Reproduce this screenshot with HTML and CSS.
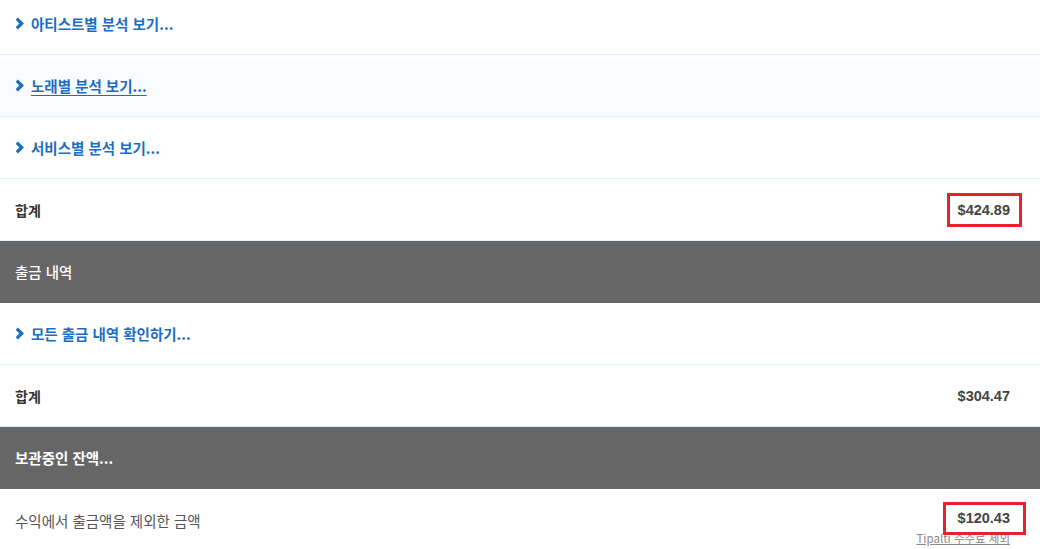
FILE: index.html
```html
<!DOCTYPE html>
<html lang="ko">
<head>
  <meta charset="UTF-8">
  <title>수익 분석</title>
  <link rel="stylesheet" href="styles.css">
</head>
<body>
  <div class="report">
    <div class="row">
      <a class="more" href="#"><svg class="chev" viewBox="0 0 8 12"><path d="M1.5 1.5 L6 6 L1.5 10.5" /></svg>아티스트별 분석 보기...</a>
    </div>
    <div class="row alt">
      <a class="more hover" href="#"><svg class="chev" viewBox="0 0 8 12"><path d="M1.5 1.5 L6 6 L1.5 10.5" /></svg><span>노래별 분석 보기...</span></a>
    </div>
    <div class="row">
      <a class="more" href="#"><svg class="chev" viewBox="0 0 8 12"><path d="M1.5 1.5 L6 6 L1.5 10.5" /></svg>서비스별 분석 보기...</a>
    </div>
    <div class="row total">
      <span class="label">합계</span>
      <span class="amount marked">$424.89</span>
    </div>
    <div class="row head">출금 내역</div>
    <div class="row">
      <a class="more" href="#"><svg class="chev" viewBox="0 0 8 12"><path d="M1.5 1.5 L6 6 L1.5 10.5" /></svg>모든 출금 내역 확인하기...</a>
    </div>
    <div class="row total">
      <span class="label">합계</span>
      <span class="amount">$304.47</span>
    </div>
    <div class="row head strong">보관중인 잔액...</div>
    <div class="row balance">
      <span class="note">수익에서 출금액을 제외한 금액</span>
      <div class="amount-col">
        <span class="amount marked wide">$120.43</span>
        <a class="fee" href="#">Tipalti 수수료 제외</a>
      </div>
    </div>
  </div>
</body>
</html>
```

FILE: styles.css
```css
body {
  margin: 0;
  background: #fff;
  font-family: "Noto Sans CJK KR", "Noto Sans", sans-serif;
  font-size: 14px;
  color: #333;
  overflow: hidden;
}
.report {
  margin-top: -7px;
}
.row {
  height: 61px;
  display: flex;
  align-items: center;
  justify-content: space-between;
  padding: 0 30px 0 15px;
  border-bottom: 1px solid #e2eef8;
  background: #fff;
}
.row.alt { background: #fafbfc; }
.more {
  display: flex;
  align-items: center;
  color: #1b6ec2;
  font-size: 14.5px;
  font-weight: bold;
  text-decoration: none;
}
.more.hover span { text-decoration: underline; text-underline-offset: 3px; }
.chev {
  width: 9px;
  height: 13px;
  margin-right: 7px;
  fill: none;
  stroke: #1b6ec2;
  stroke-width: 3;
}
.label { font-weight: bold; color: #333; }
.amount {
  position: relative;
  font-family: "Liberation Sans", Arial, sans-serif;
  font-size: 14.5px;
  font-weight: bold;
  color: #444;
}
.marked::after {
  content: "";
  position: absolute;
  left: -11px;
  right: -12px;
  top: -9px;
  bottom: -9px;
  border: 3px solid #e5232b;
}
.marked.wide::after {
  left: -15px;
  right: -16px;
  top: -8px;
  bottom: -9px;
}
.row.balance { align-items: flex-start; padding-top: 21px; height: 61px; }
.row.head {
  background: #666;
  color: #fff;
  font-size: 14.5px;
  font-weight: 500;
  border-bottom-color: #666;
}
.row.head.strong { font-weight: bold; }
.note { color: #555; font-size: 14.5px; }
.amount-col {
  display: flex;
  flex-direction: column;
  align-items: flex-end;
}
.fee {
  margin-top: 5px;
  font-size: 11.5px;
  line-height: 14px;
  color: #888;
  text-decoration: underline;
}
```
